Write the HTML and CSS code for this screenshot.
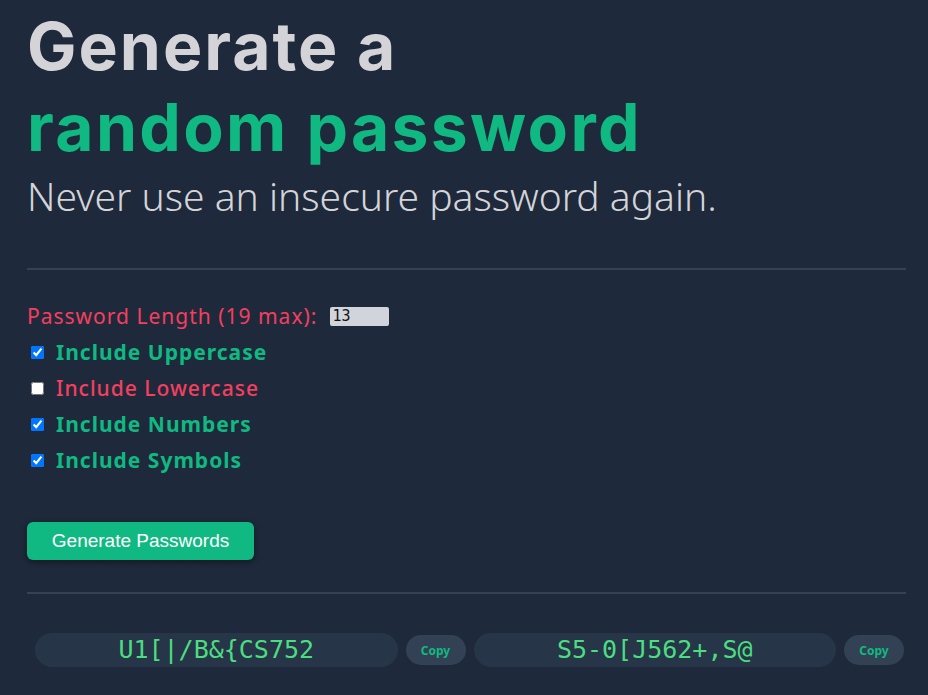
FILE: index.html
```html
<!DOCTYPE html>
<html lang="en">
<head>
<meta charset="utf-8">
<title>Password Generator</title>
<link rel="stylesheet" href="styles.css">
</head>
<body>
<main class="page">
  <header class="hero">
    <h1 class="title"><span class="line">Generate a</span><span class="line accent">random password</span></h1>
    <p class="subtitle">Never use an insecure password again.</p>
  </header>
  <hr class="rule">
  <section class="options">
    <div class="length-row">
      <label class="bad" for="len">Password Length (19 max):</label>
      <input id="len" class="len-input" type="number" value="13">
    </div>
    <label class="opt good"><input type="checkbox" checked> Include Uppercase</label>
    <label class="opt bad"><input type="checkbox"> Include Lowercase</label>
    <label class="opt good"><input type="checkbox" checked> Include Numbers</label>
    <label class="opt good"><input type="checkbox" checked> Include Symbols</label>
  </section>
  <button class="gen-btn">Generate Passwords</button>
  <hr class="rule rule-2">
  <section class="results">
    <div class="result">
      <div class="pw">U1[|/B&amp;{CS752</div>
      <button class="copy">Copy</button>
    </div>
    <div class="result">
      <div class="pw">S5-0[J562+,S@</div>
      <button class="copy">Copy</button>
    </div>
  </section>
</main>
</body>
</html>
```
FILE: styles.css
```css
html, body {
  margin: 0;
  padding: 0;
}
body {
  background: #1e293b;
  font-family: "Noto Sans", sans-serif;
  height: 695px;
  overflow: hidden;
}
.page {
  padding: 0 22px 0 27px;
}
.hero {
  padding-top: 6px;
}
.title {
  margin: 0;
  font-family: Inter, "Noto Sans", sans-serif;
  font-weight: 700;
  font-size: 66px;
  line-height: 81px;
  color: #d4d4d8;
  letter-spacing: 2px;
}
.line {
  display: block;
  height: 81px;
}
.accent {
  color: #10b981;
  letter-spacing: 2.3px;
}
.subtitle {
  margin: 4px 0 0;
  font-family: "Noto Sans", sans-serif;
  font-weight: 300;
  font-size: 39px;
  line-height: 48px;
  color: #d4d4d8;
}
.rule {
  border: 0;
  height: 2px;
  background: #374151;
  margin: 48px 0 0;
}
.options {
  padding-top: 28px;
  display: flex;
  flex-direction: column;
}
.length-row {
  display: flex;
  align-items: center;
  gap: 13px;
  height: 36px;
  font-size: 21px;
  letter-spacing: 1px;
}
.len-input {
  width: 59px;
  height: 19px;
  box-sizing: border-box;
  border: 0;
  border-radius: 2px;
  background: #d1d5db;
  padding: 0 2px;
  font-family: "DejaVu Sans Mono", monospace;
  font-size: 15px;
  letter-spacing: 0;
  color: #111;
}
.opt {
  display: flex;
  align-items: center;
  height: 36px;
  font-size: 21px;
  font-weight: 700;
  letter-spacing: 1px;
  gap: 12px;
}
.opt input {
  margin: 0 0 0 4px;
  width: 13px;
  height: 13px;
}
.good { color: #10b981; }
.bad { color: #f43f5e; }
.opt.bad { font-weight: 500; }
.gen-btn {
  margin-top: 44px;
  background: #10b981;
  color: #fff;
  border: 0;
  border-radius: 6px;
  font-family: "Liberation Sans", Arial, sans-serif;
  font-size: 19px;
  width: 227px;
  height: 38px;
  box-shadow: 0 2px 6px rgba(0,0,0,0.45);
}
.rule-2 {
  margin-top: 32px;
}
.results {
  display: grid;
  grid-template-columns: 1fr 1fr;
  gap: 8px;
  padding: 39px 2px 0 8px;
}
.result {
  display: flex;
  align-items: center;
  gap: 8px;
}
.pw {
  flex: 1;
  height: 34px;
  border-radius: 17px;
  background: #273549;
  color: #4ade80;
  font-family: "DejaVu Sans Mono", monospace;
  font-size: 25px;
  line-height: 34px;
  text-align: center;
}
.copy {
  width: 60px;
  height: 30px;
  border: 0;
  border-radius: 15px;
  background: #334155;
  color: #10b981;
  font-family: "Noto Sans", sans-serif;
  font-weight: 700;
  font-size: 12px;
}
```
